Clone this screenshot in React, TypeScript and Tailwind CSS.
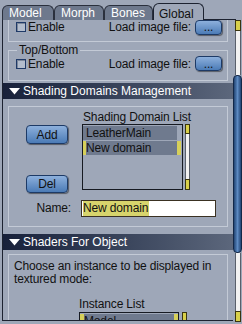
import React from "react";

const Checkbox: React.FC = () => (
  <span className="inline-block w-[10px] h-[10px] border border-[#1f3a68] bg-[#b3bdcd] shadow-[inset_1px_1px_0_#7b879b]" />
);

const BlueButton: React.FC<{ label: string; className?: string }> = ({ label, className = "" }) => (
  <button
    className={`flex items-center justify-center rounded-[4px] border border-[#1d3a66] bg-gradient-to-b from-[#8db0dc] to-[#4b7bb6] shadow-[1px_1px_1px_rgba(0,0,0,0.45)] text-[#111] text-[12px] ${className}`}
  >
    {label}
  </button>
);

const Triangle: React.FC = () => (
  <svg width="11" height="7" viewBox="0 0 11 7" className="shrink-0">
    <path d="M0 0 L11 0 L5.5 6.5 Z" fill="#ffffff" />
  </svg>
);

const SectionHeader: React.FC<{ title: string; className?: string }> = ({ title, className = "" }) => (
  <div
    className={`h-[16px] flex items-center gap-[3px] pl-[6px] bg-gradient-to-r from-[#18213a] via-[#38435a] to-[#5c677c] text-white text-[12px] tracking-normal ${className}`}
  >
    <Triangle />
    <span>{title}</span>
  </div>
);

const MiniScroll: React.FC<{ className?: string }> = ({ className = "" }) => (
  <div className={`flex flex-col w-[5px] ${className}`}>
    <div className="h-[10px] bg-[#d8d04a] border border-[#3a3510]" />
    <div className="flex-1 border-x border-[#59606c] bg-[#f2f2f2]" />
    <div className="h-[11px] bg-[#d8d04a] border border-[#3a3510]" />
  </div>
);

const Tab: React.FC<{ label: string; w: string; active?: boolean }> = ({ label, w, active }) =>
  active ? (
    <div className={`${w} h-[17px] rounded-t-[6px] border-x border-t border-[#1c2230] bg-[#9ea7b8] text-[#111] text-[12px] tracking-normal pl-[5px] pt-[1px]`}>
      {label}
    </div>
  ) : (
    <div className={`${w} h-[15px] rounded-t-[6px] border-l border-r border-t border-[#2a303d] bg-[#6e798d] text-white text-[12px] tracking-normal pl-[6px] leading-[15px]`}>
      {label}
    </div>
  );

export default function App() {
  return (
    <div className="w-[242px] h-[324px] overflow-hidden bg-[#9ea7b8] font-['Liberation_Sans',Arial,sans-serif] text-[12px] tracking-[-0.15px] text-[#111]">
      {/* tabs */}
      <div className="flex items-end h-[20px] pl-[2px]">
        <Tab label="Model" w="w-[52px]" />
        <Tab label="Morph" w="w-[50px]" />
        <Tab label="Bones" w="w-[49px]" />
        <Tab label="Global" w="w-[51px]" active />
        <div className="w-[32px] h-full border-b border-[#1c2230]" />
      </div>

      <div className="flex">
        {/* panel content */}
        <div className="w-[231px] h-[301px] ml-[2px] border-l border-b border-[#1c2230] overflow-hidden">
          {/* scrolled group tail */}
          <div className="ml-[5px] w-[220px] border-x border-b border-[#c3cad6] pb-[7px]">
            <div className="flex items-center h-[14px] pl-[7px] pr-[5px]">
              <Checkbox />
              <span className="ml-[2px]">Enable</span>
              <span className="ml-auto mr-[4px]">Load image file:</span>
              <BlueButton label="..." className="w-[27px] h-[15px] shrink-0" />
            </div>
          </div>

          <fieldset className="mt-[2px] ml-[5px] w-[220px] border border-[#c3cad6] pb-[9px]">
            <legend className="ml-[8px] px-[2px] leading-[12px]">Top/Bottom</legend>
            <div className="flex items-center h-[15px] pl-[7px] pr-[5px]">
              <Checkbox />
              <span className="ml-[2px]">Enable</span>
              <span className="ml-auto mr-[4px]">Load image file:</span>
              <BlueButton label="..." className="w-[27px] h-[15px] shrink-0" />
            </div>
          </fieldset>

          <SectionHeader title="Shading Domains Management" className="mt-[2px]" />

          <div className="mt-[7px] ml-[5px] w-[220px] border border-[#c3cad6] pt-[3px] pb-[9px]">
            <div className="flex">
              <div className="flex flex-col justify-between pl-[17px] pt-[15px] w-[59px] h-[83px]">
                <BlueButton label="Add" className="w-[42px] h-[19px]" />
                <BlueButton label="Del" className="w-[42px] h-[18px]" />
              </div>
              <div className="ml-[14px]">
                <div className="leading-[14px] pl-[1px]">Shading Domain List</div>
                <div className="flex gap-[2px]">
                  <div className="w-[101px] h-[66px] border border-[#161a22] pt-[1px] flex flex-col gap-[1px]">
                    <div className="w-[94px] h-[14px] bg-[#6f7a8e] pl-[3px] leading-[14px]">LeatherMain</div>
                    <div className="w-[98px] h-[14px] bg-[#6f7a8e] border-l-[3px] border-r-[4px] border-[#d6d05a] leading-[14px]">
                      New domain
                    </div>
                  </div>
                  <MiniScroll className="h-[66px]" />
                </div>
              </div>
            </div>
            <div className="flex items-center mt-[6px]">
              <span className="w-[62px] text-right">Name:</span>
              <div className="ml-[10px] w-[135px] h-[17px] border border-[#3a3122] bg-white pl-[1px] flex items-center">
                <span className="bg-[#d7d46c] h-[15px] leading-[15px] pr-[1px]">New domain</span>
              </div>
            </div>
          </div>

          <SectionHeader title="Shaders For Object" className="mt-[7px]" />

          <div className="mt-[4px] ml-[5px] w-[220px] border border-[#c3cad6] pt-[5px] pl-[5px] h-[80px]">
            <p className="w-[200px] leading-[13px]">Choose an instance to be displayed in textured mode:</p>
            <div className="ml-[65px] mt-[11px]">
              <div className="leading-[14px]">Instance List</div>
              <div className="flex gap-[3px] mt-[1px]">
                <div className="w-[100px] h-[30px] border border-[#161a22] pt-[1px]">
                  <div className="h-[14px] bg-[#6f7a8e] border-l-[4px] border-r-[4px] border-[#d6d05a] leading-[14px]">Model</div>
                </div>
                <MiniScroll className="h-[30px]" />
              </div>
            </div>
          </div>
        </div>

        {/* main scrollbar */}
        <div className="w-[9px] h-[302px] flex flex-col">
          <div className="ml-[2px] w-[6px] h-[11px] bg-[#d8d04a] border border-[#3a3510]" />
          <div className="ml-[2px] w-[6px] h-[44px] border-x border-[#59606c] bg-[#f2f2f2]" />
          <div className="w-[9px] h-[178px] rounded-[4px] border border-[#132848] bg-gradient-to-r from-[#234574] via-[#5d8ac2] to-[#234574]" />
          <div className="ml-[2px] w-[6px] flex-1 border-x border-[#59606c] bg-[#f2f2f2]" />
          <div className="ml-[2px] w-[6px] h-[11px] bg-[#d8d04a] border border-[#3a3510]" />
        </div>
      </div>
    </div>
  );
}
